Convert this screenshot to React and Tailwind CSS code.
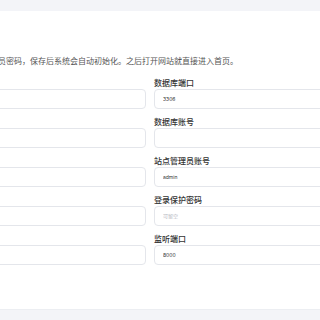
import { useState } from 'react'

const LEFT = [
  { label: '数据库地址', value: '127.0.0.1' },
  { label: '数据库名称', value: '' },
  { label: '数据库密码', value: '' },
  { label: '管理员密码', value: '' },
  { label: '网站名称', value: '' },
]

const RIGHT = [
  { label: '数据库端口', value: '3306' },
  { label: '数据库账号', value: '' },
  { label: '站点管理员账号', value: 'admin' },
  { label: '登录保护密码', value: '', placeholder: '可留空' },
  { label: '监听端口', value: '8000' },
]

function Field({ label, value, placeholder }) {
  const [val, setVal] = useState(value)
  return (
    <div className="flex flex-col">
      <label className="text-[8px] leading-[12px] font-medium text-[#333]">{label}</label>
      <input
        value={val}
        placeholder={placeholder}
        onChange={(e) => setVal(e.target.value)}
        className="h-[20px] rounded-[4px] border border-[#e4e6eb] bg-white px-2 text-[5px] text-[#333] placeholder:text-[#b5b8bf] outline-none"
      />
    </div>
  )
}

export default function App() {
  return (
    <div
      className="w-[320px] h-[320px] overflow-hidden bg-[#f3f4f8] pt-[11px]"
      style={{ fontFamily: 'Inter, "Noto Sans CJK SC", sans-serif' }}
    >
      <div className="-ml-[74px] w-[460px] h-[299px] bg-white border-b border-[#eceef2] pt-[44px]">
        <p className="text-[8px] leading-[12px] text-[#555] whitespace-nowrap">
          请填写数据库与管理员密码，保存后系统会自动初始化。之后打开网站就直接进入首页。
        </p>

        <div className="mt-[10px] grid grid-cols-[220px_220px] gap-x-2 gap-y-[7px]">
          {RIGHT.map((r, i) => [
            <Field key={'l' + i} {...LEFT[i]} />,
            <Field key={'r' + i} {...r} />,
          ])}
        </div>
      </div>
    </div>
  )
}
